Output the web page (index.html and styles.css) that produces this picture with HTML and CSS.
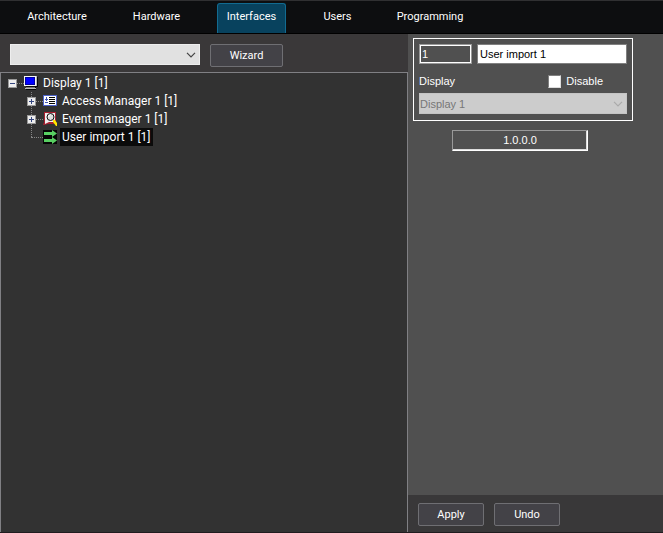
FILE: index.html
```html
<!DOCTYPE html>
<html lang="en">
<head>
<meta charset="utf-8">
<title>Interfaces</title>
<link rel="stylesheet" href="styles.css">
</head>
<body>
<div class="app">
  <nav class="tabs">
    <a class="tab" href="#architecture">Architecture</a>
    <a class="tab" href="#hardware">Hardware</a>
    <a class="tab active" href="#interfaces" aria-current="page">Interfaces</a>
    <a class="tab" href="#users">Users</a>
    <a class="tab" href="#programming">Programming</a>
  </nav>
  <main class="panes">
    <section class="objects">
      <div class="toolbar">
        <div class="select-wrap type-select">
          <select aria-label="Object type"><option></option></select>
          <svg class="chevron" viewBox="0 0 10 6"><path d="M1 .8 5 4.8 9 .8"/></svg>
        </div>
        <button class="button" type="button">Wizard</button>
      </div>
      <div class="tree">
        <ul>
          <li>
            <div class="row">
              <button class="toggle" type="button" aria-label="Collapse Display 1"><svg viewBox="0 0 9 9"><path d="M2 4.500h5"/></svg></button>
              <span class="link"></span>
              <svg class="icon" viewBox="0 0 14 14"><path fill="#080808" d="M2 1h12v10h-2v3H2z"/><path fill="#f4f4f4" d="M0 0h12v10H0z"/><path fill="#b8b8b8" d="M12 0h1v10h-1zM1 12h11v1H1z"/><path fill="#0000a0" d="M1 1h10v8H1z"/><path fill="#0000ff" d="M2 2h8v6H2z"/><path fill="#777" d="M2 11h9v1H2z"/></svg>
              <span class="label">Display 1 [1]</span>
            </div>
            <ul class="children">
              <li class="row">
                <button class="toggle" type="button" aria-label="Expand Access Manager 1"><svg viewBox="0 0 9 9"><path d="M2 4.500h5M4.500 2v5"/></svg></button>
                <span class="link"></span>
                <svg class="icon" viewBox="0 0 14 14"><path fill="#4c62c8" d="M0 1h14v11H0z"/><path fill="#fff" d="M1 2h12v9H1z"/><path fill="#4055b8" d="M3 3h1v2H3zM2 5h3v1H2zM3 6h1v1H3zM2 8h3v1H2z"/><path fill="#050505" d="M6 3h6v1H6zM6 5h6v1H6zM6 7h6v1H6zM6 9h6v1H6z"/></svg>
                <span class="label">Access Manager 1 [1]</span>
              </li>
              <li class="row">
                <button class="toggle" type="button" aria-label="Expand Event manager 1"><svg viewBox="0 0 9 9"><path d="M2 4.500h5M4.500 2v5"/></svg></button>
                <span class="link"></span>
                <svg class="icon" viewBox="0 0 14 14"><path fill="#a82030" d="M1 0h12v11l-2 1H5l-4 1H0l1-3z"/><path fill="#f2eeee" d="M2 1h10v9H6l-4 2z"/><circle cx="7.500" cy="5" r="3.500" fill="#ddd" stroke="#111"/><path stroke="#fff" d="M5.500 5a2 2 0 0 1 2-2" fill="none"/><path fill="#ffe600" d="M10 8h2l2 3v3h-1l-3-4z"/></svg>
                <span class="label">Event manager 1 [1]</span>
              </li>
              <li class="row">
                <span class="elbow"></span>
                <svg class="icon" viewBox="0 0 14 14"><path fill="#050505" d="M0 0h14v14H0z"/><path fill="#58cf62" d="M1 2h8V0l5 3.500L9 7V5H1zM1 9h8V7l5 3.500L9 14v-2H1z"/></svg>
                <span class="label selected">User import 1 [1]</span>
              </li>
            </ul>
          </li>
        </ul>
      </div>
    </section>
    <form class="settings">
      <div class="settings-body">
        <div class="identity">
          <div class="fields">
            <input class="field number" type="text" value="1" aria-label="Number" readonly>
            <input class="field name" type="text" value="User import 1" aria-label="Name">
          </div>
          <div class="fields options">
            <label for="display">Display</label>
            <label class="disable"><input type="checkbox"> Disable</label>
          </div>
          <div class="select-wrap disabled">
            <select id="display" disabled><option>Display 1</option></select>
            <svg class="chevron" viewBox="0 0 10 6"><path d="M1 .8 5 4.8 9 .8"/></svg>
          </div>
        </div>
        <output class="version">1.0.0.0</output>
      </div>
      <div class="actions">
        <button class="button small" type="button">Apply</button>
        <button class="button small" type="button">Undo</button>
      </div>
    </form>
  </main>
</div>
</body>
</html>
```
FILE: styles.css
```css
* {
  box-sizing: border-box;
}

body {
  margin: 0;
  color: #fff;
  background: #333;
  font: 12px/18px Roboto, "Open Sans", sans-serif;
}

button,
input,
select {
  margin: 0;
  color: inherit;
  font: inherit;
}

ul {
  margin: 0;
  padding: 0;
  list-style: none;
}

.app {
  display: flex;
  flex-direction: column;
  min-height: 100vh;
  border-bottom: 1px solid #201c1f;
}

.tabs {
  display: grid;
  grid-template-columns: 78px 67px 69px 49px 82px;
  gap: 27px;
  height: 34px;
  padding: 2px 18px 0;
  border-top: 1px solid #303032;
  border-bottom: 1px solid #000;
  background: #0d0e10;
  font-size: 11px;
}

.tab {
  border: 1px solid transparent;
  border-bottom: 0;
  border-radius: 3px 3px 0 0;
  color: #fff;
  line-height: 26px;
  text-align: center;
  text-decoration: none;
}

.tab.active {
  border-color: #126b91;
  background: #08425e;
}

.panes {
  display: grid;
  flex: 1;
  grid-template-columns: 408fr 255fr;
}

.objects {
  display: flex;
  flex-direction: column;
  background: #3a3839;
}

.toolbar {
  display: flex;
  gap: 10px;
  padding: 10px 10px 5px;
}

.select-wrap {
  position: relative;
  height: 21px;
}

.type-select {
  width: 190px;
}

.select-wrap select {
  width: 100%;
  height: 100%;
  padding: 0;
  border: 1px solid #eee;
  border-radius: 0;
  appearance: none;
  background: #e1e1e1;
  color: #111;
}

.chevron {
  position: absolute;
  top: 8px;
  right: 4px;
  width: 10px;
  height: 6px;
  fill: none;
  stroke: #444;
  stroke-width: 1.200;
  pointer-events: none;
}

.button {
  width: 73px;
  height: 23px;
  padding: 0;
  border: 1px solid #6f6f73;
  border-radius: 2px;
  background: #434247;
  font-size: 11px;
}

.button.small {
  width: 66px;
}

.tree {
  flex: 1;
  padding: 1px 0 0 7px;
  border: solid #808084;
  border-width: 1px 1px 0;
  background: #323232;
}

.row {
  display: flex;
  align-items: center;
  height: 18px;
}

.toggle {
  position: relative;
  width: 9px;
  height: 9px;
  padding: 0;
  border: 0;
  background: #eee;
  outline: 1px solid #999;
  outline-offset: -1px;
}

.toggle svg {
  display: block;
  width: 9px;
  height: 9px;
  stroke: #33457f;
}

.link {
  width: 7px;
  border-top: 1px dotted #858585;
}

.icon {
  width: 14px;
  height: 14px;
}

.label {
  margin-left: 3px;
  padding: 0 2px;
  line-height: 18px;
}

.selected {
  background: #0b0b0b;
}

.children {
  position: relative;
  padding-left: 19px;
}

.children::before {
  position: absolute;
  top: 0;
  bottom: 9px;
  left: 23px;
  border-left: 1px dotted #858585;
  content: "";
}

.elbow {
  width: 12px;
  margin-left: 4px;
  border-top: 1px dotted #858585;
}

.settings {
  display: flex;
  flex-direction: column;
  font-family: "Liberation Sans", Arial, sans-serif;
  font-size: 11px;
}

.settings-body {
  flex: 1;
  padding: 4px 5px;
  background: #505050;
}

.identity {
  max-width: 220px;
  padding: 5px 5px 6px;
  border: 1px solid #fff;
}

.fields {
  display: flex;
  gap: 5px;
}

.field {
  height: 20px;
  padding: 0 2px;
  border: 1px solid #808080;
  border-radius: 0;
  background: #fff;
  color: #000;
}

.number {
  width: 53px;
  border-color: #999;
  background: #505050;
  color: #fff;
  outline: 1px solid #fff;
  outline-offset: -2px;
}

.name {
  flex: 1;
  min-width: 0;
}

.options {
  align-items: center;
  justify-content: space-between;
  padding: 8px 24px 3px 0;
}

.disable {
  display: flex;
  align-items: center;
  gap: 5px;
}

.disable input {
  width: 13px;
  height: 13px;
  border: 1px solid;
  border-color: #808080 #ddd #ddd #808080;
  appearance: none;
  background: #fff;
}

.disabled select {
  border-color: #c4c4c4;
  background: #ccc;
  color: #777;
  opacity: 1;
}

.disabled .chevron {
  stroke: #aaa;
}

.version {
  display: block;
  width: 136px;
  height: 21px;
  margin: 9px 0 0 39px;
  border: 1px solid;
  border-color: #999 #fff #fff #999;
  box-shadow: inset -1px -1px #ddd;
  line-height: 18px;
  text-align: center;
}

.actions {
  display: flex;
  gap: 10px;
  padding: 8px 10px 6px;
  background: #393839;
  font: 12px/18px Roboto, "Open Sans", sans-serif;
}
```
